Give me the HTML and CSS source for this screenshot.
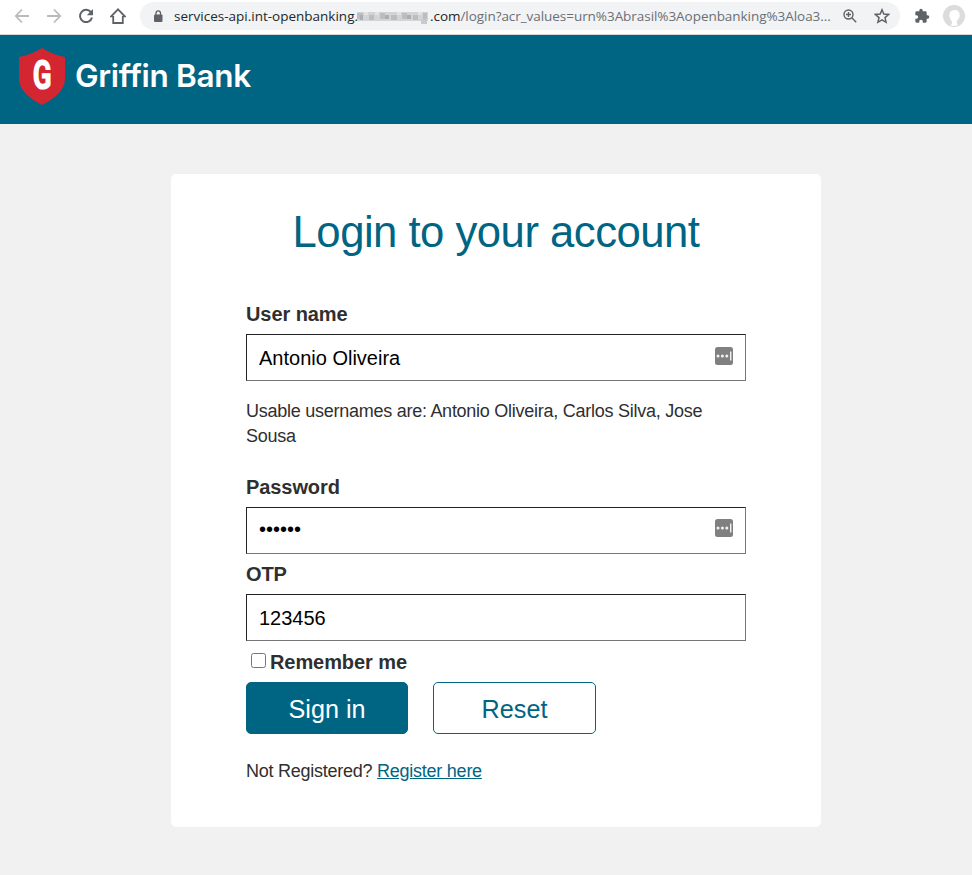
FILE: index.html
```html
<!DOCTYPE html>
<html lang="en">
<head>
<meta charset="utf-8">
<title>Griffin Bank</title>
<link rel="stylesheet" href="styles.css">
</head>
<body>
<div class="toolbar">
  <svg class="nav" width="16" height="16" viewBox="0 0 16 16" fill="none" stroke="#b9bbbd" stroke-width="1.8"><path d="M15 8H2M8 1.5 1.8 8 8 14.5"/></svg>
  <svg class="nav" width="16" height="16" viewBox="0 0 16 16" fill="none" stroke="#b9bbbd" stroke-width="1.8"><path d="M1 8h13M8 1.5 14.2 8 8 14.5"/></svg>
  <svg class="nav" width="16" height="16" viewBox="0 0 16 16"><path d="M13.2 4.6A6.1 6.1 0 1 0 14 9.5" fill="none" stroke="#5f6368" stroke-width="2"/><path d="M15 1v6.3H8.8z" fill="#5f6368"/></svg>
  <svg class="nav" width="16" height="16" viewBox="0 0 16 16" fill="none" stroke="#5f6368" stroke-width="1.8"><path d="M3.2 8v7h9.600V8M3.200 8.300H1.200L8 1.400l6.800 6.900h-2"/></svg>
  <div class="address">
    <svg class="lock" width="10" height="13" viewBox="0 0 10 13"><rect x="1" y="4.500" width="8.500" height="7.500" rx="1" fill="#5f6368"/><path d="M3 5V3.200a2.200 2.200 0 0 1 4.500 0V5" fill="none" stroke="#5f6368" stroke-width="1.300"/></svg>
    <span class="host">services-api.int-openbanking.</span>
    <svg class="mosaic" width="74" height="17" viewBox="0 0 74 17"><path fill="#d3d4d6" d="M1 4h71v9H1z"/><path fill="#bbbdc0" d="M1 5h6v6H1zM13 7h5v5h-5zM24 5h5v6h-5zM35 7h6v5h-6zM46 5h5v6h-5zM57 7h5v5h-5zM67 5h4v6h-4z"/><path fill="#acaeb2" d="M4 7h3v5H4zM29 7h4v4h-4zM51 7h4v4h-4z"/><path fill="#e2e3e5" d="M8 4h4v3H8zM19 4h4v3h-4zM41 4h4v3h-4zM62 4h4v3h-4z"/><path fill="#c8cacd" d="M65 11h6v5h-6z"/></svg>
    <span class="url"><b>.com</b>/login?acr_values=urn%3Abrasil%3Aopenbanking%3Aloa3...</span>
    <svg class="find" width="14" height="14" viewBox="0 0 14 14" fill="none" stroke="#5f6368" stroke-width="1.400"><circle cx="5.500" cy="5.500" r="4.500"/><path d="M8.800 8.800 13.200 13.200M5.500 3v5M3 5.500h5"/></svg>
    <svg class="star" width="16" height="16" viewBox="0 0 16 16" fill="none" stroke="#5f6368" stroke-width="1.500"><path d="m8 1.800 1.800 4.300 4.700.4L11 9.600l1.100 4.700L8 11.800l-4.100 2.500L5 9.600 1.500 6.500l4.700-.4z"/></svg>
  </div>
  <svg class="puzzle" width="16" height="16" viewBox="0 0 24 24"><path fill="#5f6368" d="M20.500 11H19V7c0-1.100-.9-2-2-2h-4V3.500a2.500 2.500 0 0 0-5 0V5H4c-1.100 0-2 .9-2 2v3.800h1.500a2.700 2.700 0 0 1 0 5.400H2V20c0 1.100.9 2 2 2h3.800v-1.500a2.700 2.700 0 0 1 5.400 0V22H17c1.100 0 2-.9 2-2v-4h1.500a2.500 2.500 0 0 0 0-5z"/></svg>
  <svg class="avatar" width="22" height="22" viewBox="0 0 22 22"><circle cx="11" cy="11" r="11" fill="#dcdcdc"/><path fill="#fff" d="M11.500 5c-4 0-5.300 3-5 6 .2 3 1.300 4.200 2.300 5.200.4 1.800 0 3.300-1.300 4.200 2 .8 5 .8 7.500-.4-1.200-1-1.400-2.800-1-4.300 1.300-1.300 2.700-2.500 2.700-5.700s-1.900-5-5.200-5z"/></svg>
</div>
<header class="brand">
  <svg width="46" height="58" viewBox="0 0 46 58"><path fill="#d32630" d="M23 0C15.500 5 7.500 7.500 0 9v22c0 11 11 20 23 26 12-6 23-15 23-26V9C38.500 7.500 30.500 5 23 0z"/><text class="mark" x="13.800" y="41.300" textLength="18.800" lengthAdjust="spacingAndGlyphs">G</text></svg>
  <span class="brand-name">Griffin Bank</span>
</header>
<main class="card">
  <h1>Login to your account</h1>
  <form class="form">
    <label for="user">User name</label>
    <div class="field"><input id="user" type="text" value="Antonio Oliveira"><svg class="key" width="18" height="18" viewBox="0 0 18 18"><rect width="18" height="18" rx="2.500" fill="#808080"/><g fill="#f2f2f2"><circle cx="3" cy="9" r="1.500"/><circle cx="7.400" cy="9" r="1.500"/><circle cx="11.800" cy="9" r="1.500"/><path d="M15 4.500h1.400v9H15z"/></g></svg></div>
    <p class="hint">Usable usernames are: Antonio Oliveira, Carlos Silva, Jose Sousa</p>
    <label for="pass">Password</label>
    <div class="field"><input id="pass" class="secret" type="text" value="••••••"><svg class="key raised" width="18" height="18" viewBox="0 0 18 18"><rect width="18" height="18" rx="2.500" fill="#808080"/><g fill="#f2f2f2"><circle cx="3" cy="9" r="1.500"/><circle cx="7.400" cy="9" r="1.500"/><circle cx="11.800" cy="9" r="1.500"/><path d="M15 4.500h1.400v9H15z"/></g></svg></div>
    <label for="otp" class="otp">OTP</label>
    <div class="field"><input id="otp" type="text" value="123456"></div>
    <div class="remember"><input id="rem" type="checkbox"><label for="rem">Remember me</label></div>
    <div class="actions"><button type="button" class="primary">Sign in</button><button type="button">Reset</button></div>
    <p class="register">Not Registered? <a href="#">Register here</a></p>
  </form>
</main>
</body>
</html>
```
FILE: styles.css
```css
* { box-sizing: border-box; }
body { margin: 0; min-height: 875px; background: #f1f1f1; font-family: "Liberation Sans", Arial, sans-serif; color: #2f2f2f; overflow: hidden; }
.toolbar { height: 35px; background: #fff; border-bottom: 1px solid #d5d7d9; display: flex; align-items: center; padding: 0 7px 2px 14px; }
.nav { margin-right: 16px; flex: none; }
.address { width: 760px; height: 28px; margin-left: -2px; flex: none; border-radius: 14px; background: #f1f3f4; display: flex; align-items: center; font: 13.5px "Open Sans", "Noto Sans", sans-serif; color: #6b6f74; white-space: nowrap; }
.lock { margin: 0 11px 0 13px; flex: none; }
.host { color: #25272a; width: 182px; flex: none; }
.mosaic { flex: none; width: 74px; }
.url { width: 399px; flex: none; letter-spacing: -.05px; }
.url b { font-weight: 400; color: #25272a; }
.find { margin-left: 14px; flex: none; }
.star { margin-left: 17px; flex: none; }
.puzzle { margin-left: 14px; flex: none; }
.avatar { margin-left: 13px; flex: none; }
.brand { height: 89px; background: #006583; color: #fff; display: flex; padding: 13px 0 0 19px; }
.brand svg { flex: none; }
.mark { font: bold 41px Roboto, sans-serif; fill: #fff; stroke: #fff; stroke-width: 1.2px; }
.brand-name { font: 600 31.500px/38px Inter, sans-serif; letter-spacing: -.3px; margin: 9px 0 0 10px; white-space: nowrap; }
.card { width: 650px; height: 653px; margin: 50px 0 0 171px; padding: 33px 75px 0; background: #fff; border-radius: 5px; }
h1 { margin: 0; font-size: 43.700px; line-height: 50px; letter-spacing: -.52px; font-weight: 400; color: #006583; text-align: center; white-space: nowrap; }
.form { margin-top: 45px; }
label { display: block; font-weight: 700; font-size: 20px; line-height: 24px; letter-spacing: -.08px; }
.field { display: flex; position: relative; margin-top: 8px; }
.field input { width: 500px; height: 47px; border: 1px solid #767676; border-top-color: #222; border-left-color: #222; padding: 1px 12px 0; font: 20px "Liberation Sans", Arial, sans-serif; color: #000; background: #fff; outline: 0; }
.field .secret { padding: 0 12px 2px; }
.key { position: absolute; left: 469px; top: 13px; }
.key.raised { top: 12px; }
.hint { margin: 18px 0 26px; font-size: 18px; line-height: 25px; letter-spacing: -.26px; }
.otp { margin-top: 8px; }
.remember { display: flex; height: 41px; padding-top: 9px; }
.remember input { width: 15px; height: 15px; margin: 3px 4px 0 5px; }
.actions { display: flex; gap: 25px; }
button { width: 163px; height: 52px; border: 1px solid #006583; border-radius: 5px; background: #fff; color: #006583; font: 25.200px "Liberation Sans", Arial, sans-serif; padding: 2px 0 0; }
button.primary { width: 162px; background: #006583; color: #fff; }
.register { margin: 25px 0 0; font-size: 18px; line-height: 25px; letter-spacing: -.25px; }
a { color: #006583; }
```
